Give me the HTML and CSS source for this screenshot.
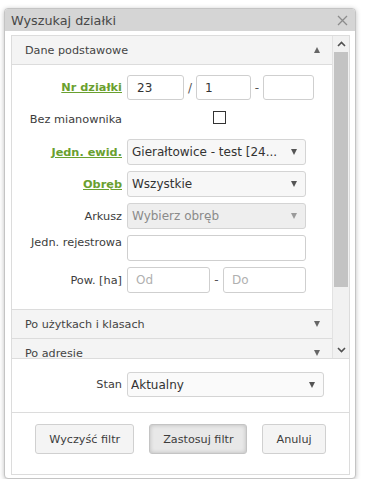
FILE: index.html
```html
<!DOCTYPE html>
<html lang="pl">

<head>
    <meta charset="UTF-8">
    <meta name="viewport" content="width=device-width, initial-scale=1.0">
    <title>Wyszukaj działki</title>
    <link rel="stylesheet" href="styles.css">
</head>

<body>
    <div class="dialog">
        <div class="dialog-title">
            <span>Wyszukaj działki</span>
            <button class="close-btn" title="Zamknij">
                <svg width="11" height="11" viewBox="0 0 11 11">
                    <path d="M1 1 L10 10 M10 1 L1 10" stroke="#8c8c8c" stroke-width="1.3" fill="none" />
                </svg>
            </button>
        </div>
        <div class="dialog-body">
            <div class="frame">
                <div class="scroll-area">
                    <div class="accordion">
                        <div class="acc-header open">Dane podstawowe</div>
                        <div class="acc-content">
                            <div class="form-row">
                                <a class="label link" href="#">Nr działki</a>
                                <div class="field">
                                    <input type="text" class="input nr-1" value="23">
                                    <span class="sep">/</span>
                                    <input type="text" class="input nr-2" value="1">
                                    <span class="sep">-</span>
                                    <input type="text" class="input nr-3" value="">
                                </div>
                            </div>
                            <div class="form-row row-check">
                                <label class="label" for="bez-mian">Bez mianownika</label>
                                <div class="field">
                                    <input type="checkbox" id="bez-mian" class="checkbox">
                                </div>
                            </div>
                            <div class="form-row">
                                <a class="label link" href="#">Jedn. ewid.</a>
                                <div class="field">
                                    <div class="select"><span class="value">Gierałtowice - test [24...</span></div>
                                </div>
                            </div>
                            <div class="form-row">
                                <a class="label link" href="#">Obręb</a>
                                <div class="field">
                                    <div class="select"><span class="value">Wszystkie</span></div>
                                </div>
                            </div>
                            <div class="form-row">
                                <span class="label">Arkusz</span>
                                <div class="field">
                                    <div class="select disabled"><span class="value">Wybierz obręb</span></div>
                                </div>
                            </div>
                            <div class="form-row">
                                <span class="label label-top">Jedn. rejestrowa</span>
                                <div class="field">
                                    <input type="text" class="input wide">
                                </div>
                            </div>
                            <div class="form-row">
                                <span class="label">Pow. [ha]</span>
                                <div class="field">
                                    <input type="text" class="input pow-od" placeholder="Od">
                                    <span class="sep sep-pow">-</span>
                                    <input type="text" class="input pow-do" placeholder="Do">
                                </div>
                            </div>
                        </div>
                        <div class="acc-header">Po użytkach i klasach</div>
                        <div class="acc-header">Po adresie</div>
                    </div>
                    <div class="scrollbar">
                        <div class="sb-btn">
                            <svg width="9" height="6" viewBox="0 0 9 6">
                                <path d="M1 5 L4.5 1.5 L8 5" stroke="#505050" stroke-width="1.6" fill="none" />
                            </svg>
                        </div>
                        <div class="sb-track">
                            <div class="sb-thumb"></div>
                        </div>
                        <div class="sb-btn">
                            <svg width="9" height="6" viewBox="0 0 9 6">
                                <path d="M1 1 L4.5 4.5 L8 1" stroke="#505050" stroke-width="1.6" fill="none" />
                            </svg>
                        </div>
                    </div>
                </div>
                <div class="stan-section">
                    <div class="form-row">
                        <span class="label">Stan</span>
                        <div class="field">
                            <div class="select stan"><span class="value">Aktualny</span></div>
                        </div>
                    </div>
                </div>
                <div class="buttons">
                    <button class="btn">Wyczyść filtr</button>
                    <button class="btn active">Zastosuj filtr</button>
                    <button class="btn">Anuluj</button>
                </div>
            </div>
        </div>
    </div>
</body>

</html>
```

FILE: styles.css
```css
body {
    font-family: "DejaVu Sans", Verdana, sans-serif;
    font-size: 11px;
    margin: 0;
    padding: 8px 0 0 4px;
    background-color: #fff;
    color: #333;
}

.dialog {
    width: 350px;
    border: 1px solid #c4c4c4;
    border-radius: 4px;
    background-color: #fff;
    box-shadow: 0 1px 5px rgba(0, 0, 0, 0.25);
    overflow: hidden;
}

.dialog-title {
    height: 22px;
    background-color: #d5d5d5;
    display: flex;
    align-items: center;
    justify-content: space-between;
    padding: 0 7px 0 6px;
    font-size: 12.8px;
    color: #484848;
}

.close-btn {
    border: none;
    background: none;
    padding: 0;
    width: 11px;
    height: 11px;
    display: flex;
    cursor: pointer;
}

.dialog-body {
    padding: 4px 5px 3px 6px;
}

.frame {
    border: 1px solid #dcdcdc;
}

.scroll-area {
    display: flex;
    height: 322px;
    border-bottom: 1px solid #dcdcdc;
}

.accordion {
    flex: 1;
    overflow: hidden;
    border-right: 1px solid #e2e2e2;
}

.acc-header {
    height: 28px;
    padding: 0 12px 0 13px;
    display: flex;
    align-items: center;
    justify-content: space-between;
    background-color: #f4f4f4;
    border-bottom: 1px solid #dcdcdc;
    font-size: 11.2px;
    color: #444;
}

.acc-header::after {
    content: "";
    border-left: 3.5px solid transparent;
    border-right: 3.5px solid transparent;
    border-top: 6px solid #666;
}

.acc-header.open::after {
    border-top: none;
    border-bottom: 6px solid #666;
}

.acc-content {
    display: flex;
    flex-direction: column;
    gap: 6px;
    padding: 10px 0 16px;
    border-bottom: 1px solid #dcdcdc;
}

.form-row {
    display: flex;
    align-items: center;
    gap: 5px;
    height: 26px;
}

.form-row:first-child {
    height: 25px;
}

.row-check {
    height: 27px;
}

.label {
    width: 110px;
    flex-shrink: 0;
    text-align: right;
    font-size: 11.3px;
    color: #3c3c3c;
}

.label-top {
    align-self: flex-start;
    line-height: 15px;
}

.link {
    color: #6aa02f;
    font-weight: bold;
    text-decoration: underline;
}

.field {
    display: flex;
    align-items: center;
    height: 100%;
}

.input {
    box-sizing: border-box;
    height: 100%;
    border: 1px solid #cfcfcf;
    border-radius: 3px;
    padding: 0 8px;
    font-family: inherit;
    font-size: 12px;
    color: #333;
    background-color: #fff;
}

.input::placeholder {
    color: #b0b0b0;
}

.nr-1 {
    width: 57px;
    padding-left: 9px;
}

.nr-2 {
    width: 55px;
}

.nr-3 {
    width: 51px;
}

.sep {
    width: 12px;
    text-align: center;
    color: #555;
    font-size: 12px;
}

.sep-pow {
    width: 13px;
}

.wide {
    width: 179px;
}

.pow-od {
    width: 83px;
}

.pow-do {
    width: 83px;
}

.checkbox {
    appearance: none;
    width: 13px;
    height: 13px;
    margin: -5px 0 0 86px;
    border: 1px solid #333;
    background-color: #fff;
}

.select {
    box-sizing: border-box;
    width: 179px;
    height: 100%;
    display: flex;
    align-items: center;
    justify-content: space-between;
    padding: 0 8px 0 4px;
    border: 1px solid #d4d4d4;
    border-radius: 3px;
    background-color: #f7f7f7;
    font-size: 12px;
    color: #333;
}

.select::after {
    content: "";
    flex-shrink: 0;
    border-left: 3.5px solid transparent;
    border-right: 3.5px solid transparent;
    border-top: 6px solid #555;
}

.select .value {
    white-space: nowrap;
    overflow: hidden;
}

.select.disabled {
    background-color: #eeeeee;
    color: #8a8a8a;
}

.select.disabled::after {
    border-top-color: #9a9a9a;
}

.select.stan {
    width: 197px;
    padding-left: 3px;
    background-color: #fafafa;
}

.scrollbar {
    width: 16px;
    display: flex;
    flex-direction: column;
    background-color: #f1f1f1;
}

.sb-btn {
    height: 16px;
    display: flex;
    align-items: center;
    justify-content: center;
}

.sb-track {
    flex: 1;
    padding: 0 1px;
}

.sb-thumb {
    height: 235px;
    background-color: #c3c3c3;
}

.stan-section {
    padding: 13px 0 15px;
}

.stan-section .form-row {
    height: 25px;
}

.buttons {
    display: flex;
    justify-content: center;
    gap: 15px;
    padding: 11px 0 20px;
    border-top: 1px solid #dcdcdc;
}

.btn {
    height: 30px;
    padding: 0 13px;
    border: 1px solid #d0d0d0;
    border-radius: 3px;
    background-color: #f4f4f4;
    font-family: inherit;
    font-size: 11.2px;
    color: #3c3c3c;
    cursor: pointer;
}

.btn.active {
    background-color: #e8e8e8;
    border-color: #c4c4c4;
    box-shadow: inset 0 0 4px rgba(0, 0, 0, 0.2);
}
```
